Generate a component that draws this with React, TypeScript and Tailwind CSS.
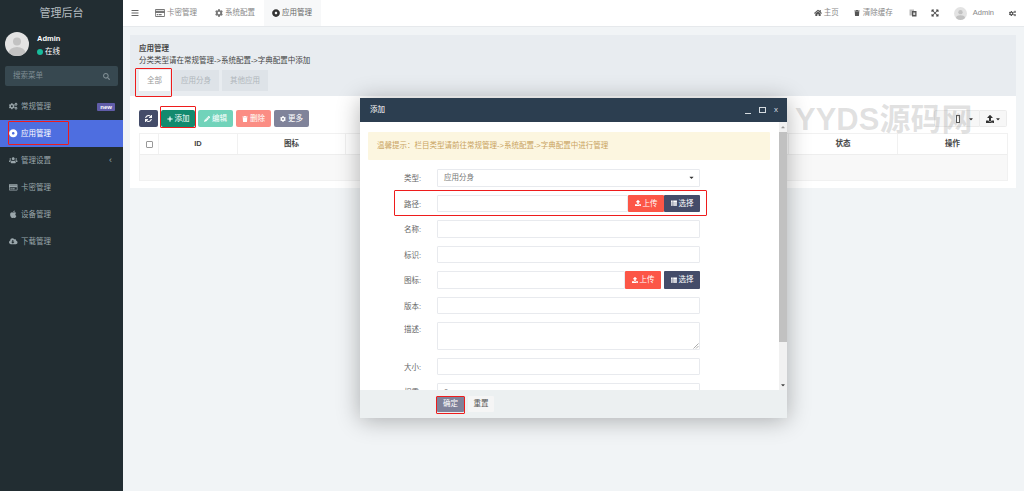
import { ReactNode } from 'react';
import {
  FaApple,
  FaBars,
  FaCaretDown,
  FaCaretUp,
  FaCloudDownloadAlt,
  FaCog,
  FaCogs,
  FaDotCircle,
  FaExpandArrowsAlt,
  FaHome,
  FaPencilAlt,
  FaPlus,
  FaRegCreditCard,
  FaSearch,
  FaSync,
  FaThList,
  FaTrash,
  FaUpload,
  FaUsers,
} from 'react-icons/fa';

const font = "font-['Liberation_Sans','Noto_Sans_CJK_SC',sans-serif]";

function Avatar({ size }: { size: string }) {
  return (
    <svg viewBox="0 0 24 24" className={`${size} shrink-0 rounded-full`}>
      <rect width="24" height="24" fill="#e3e3e3" />
      <circle cx="12" cy="9.5" r="4" fill="#c2c2c2" />
      <ellipse cx="12" cy="21" rx="8.5" ry="6" fill="#c2c2c2" />
    </svg>
  );
}

function MenuItem({ icon, label, active, children }: { icon: ReactNode; label: string; active?: boolean; children?: ReactNode }) {
  return (
    <div className={`flex h-[27px] items-center gap-[3px] pl-[9px] pr-[8px] text-[7.5px] ${active ? 'bg-[#4e6ee0] text-white' : 'text-[#9aa6ab]'}`}>
      <span className="flex w-[9px] justify-center text-[8.5px]">{icon}</span>
      <span>{label}</span>
      <span className="ml-auto">{children}</span>
    </div>
  );
}

function Sidebar() {
  return (
    <aside className="flex w-[123px] shrink-0 flex-col bg-[#222d32]">
      <div className="flex h-[26px] items-center justify-center text-[11px] text-[#b4bcc0]">管理后台</div>
      <div className="flex h-[40px] items-start gap-[8px] pl-[5px] pt-[6px]">
        <Avatar size="h-[24px] w-[24px]" />
        <div className="text-[7.5px] leading-[13px] text-white">
          <div className="font-bold">Admin</div>
          <div className="flex items-center gap-[2px]">
            <span className="h-[6px] w-[6px] rounded-full bg-[#18bc9c]" />
            在线
          </div>
        </div>
      </div>
      <div className="mx-[5px] flex h-[20px] items-center justify-between rounded-[2px] bg-[#374850] px-[8px] text-[7.5px] text-[#7f8d93]">
        搜索菜单
        <FaSearch className="text-[7px]" />
      </div>
      <nav className="mt-[7px]">
        <MenuItem icon={<FaCogs />} label="常规管理">
          <span className="block h-[8px] rounded-[1px] bg-[#605ca8] px-[3px] text-[6px] font-bold leading-[8px] text-white">new</span>
        </MenuItem>
        <MenuItem icon={<FaDotCircle />} label="应用管理" active />
        <MenuItem icon={<FaUsers />} label="管理设置">
          <span className="mr-[3px] text-[9px]">‹</span>
        </MenuItem>
        <MenuItem icon={<FaRegCreditCard />} label="卡密管理" />
        <MenuItem icon={<FaApple />} label="设备管理" />
        <MenuItem icon={<FaCloudDownloadAlt />} label="下载管理" />
      </nav>
    </aside>
  );
}

function TopTab({ icon, label, active }: { icon: ReactNode; label: string; active?: boolean }) {
  return (
    <div className={`flex h-full items-center gap-[2px] pl-[8px] text-[7.5px] ${active ? 'bg-[#f7f8f9] pr-[9px] text-[#666]' : 'pr-[8px] text-[#888]'}`}>
      <span className={active ? 'text-[#333]' : 'text-[#777]'}>{icon}</span>
      {label}
    </div>
  );
}

function LanguageIcon() {
  return (
    <svg viewBox="0 0 16 16" className="ml-[16px] h-[8px] w-[8px]">
      <rect x="1" y="1" width="9" height="12" fill="#bbb" />
      <rect x="6" y="4" width="9" height="11" fill="#555" />
      <rect x="8.5" y="7" width="4" height="5" fill="#ddd" />
    </svg>
  );
}

function TopBar() {
  return (
    <header className="flex h-[27px] shrink-0 items-center border-b border-[#e6e9ec] bg-white text-[#666]">
      <FaBars className="ml-[8px] mr-[8px] text-[8px]" />
      <TopTab icon={<FaRegCreditCard className="text-[10px]" />} label="卡密管理" />
      <div className="w-[2px]" />
      <TopTab icon={<FaCog className="text-[8px]" />} label="系统配置" />
      <div className="w-[1px]" />
      <TopTab icon={<FaDotCircle className="text-[8px]" />} label="应用管理" active />
      <div className="ml-auto flex items-center text-[7.5px] text-[#888]">
        <FaHome className="mr-[2px] text-[8px] text-[#555]" />
        主页
        <FaTrash className="ml-[15px] mr-[3px] text-[6px] text-[#555]" />
        清除缓存
        <LanguageIcon />
        <FaExpandArrowsAlt className="ml-[14px] text-[8px] text-[#444]" />
        <span className="ml-[15px] mr-[6px]">
          <Avatar size="h-[13px] w-[13px]" />
        </span>
        Admin
        <FaCogs className="ml-[15px] mr-[8px] text-[7px] text-[#555]" />
      </div>
    </header>
  );
}

function ToolButton({ color, children }: { color: string; children: ReactNode }) {
  return <div className={`flex h-[17px] items-center justify-center gap-[2px] rounded-[2px] text-[7.5px] text-white ${color}`}>{children}</div>;
}

function Th({ className, children }: { className: string; children?: ReactNode }) {
  return <div className={`flex h-full items-center justify-center border-r border-[#f1f1f1] text-[7.5px] font-bold text-[#444] ${className}`}>{children}</div>;
}

function Panel() {
  return (
    <section className="ml-[7px] mr-[8px] mt-[8px] flex-col bg-white">
      <div className="h-[61px] bg-[#e8ecf0] pl-[9px] pt-[8px] text-[7.5px] leading-[12px] text-[#444]">
        <div className="font-bold">应用管理</div>
        <div>分类类型请在常规管理-&gt;系统配置-&gt;字典配置中添加</div>
        <div className="mt-[3px] flex h-[21px] gap-[3px] text-[#b0b6bb]">
          <div className="flex w-[31px] items-center justify-center bg-white text-[#999]">全部</div>
          <div className="flex w-[46px] items-center justify-center bg-[#dee3e8]">应用分身</div>
          <div className="flex w-[46px] items-center justify-center bg-[#dee3e8]">其他应用</div>
        </div>
      </div>
      <div className="h-[92px] px-[9px] pt-[14px]">
        <div className="flex gap-[3px]">
          <ToolButton color="w-[19px] bg-[#444c69]"><FaSync className="text-[7px]" /></ToolButton>
          <ToolButton color="w-[34px] bg-[#128a6e]"><FaPlus className="text-[6px]" />添加</ToolButton>
          <ToolButton color="w-[35px] bg-[#71d3ba]"><FaPencilAlt className="text-[6px]" />编辑</ToolButton>
          <ToolButton color="w-[35px] bg-[#fb8d84]"><FaTrash className="text-[6px]" />删除</ToolButton>
          <ToolButton color="w-[35px] bg-[#80839a]"><FaCog className="text-[6px]" />更多</ToolButton>
          <div className="ml-auto flex h-[17px] text-[#333]">
            <div className="flex w-[46px] items-center justify-end gap-[8px] rounded-l-[2px] border border-[#ececec] bg-[#f7f7f7] pr-[5px] text-[6px]">
              <span className="h-[8px] w-[4px] border border-[#555]" />
              <FaCaretDown />
            </div>
            <div className="flex w-[27px] items-center justify-center gap-[1px] rounded-r-[2px] border border-l-0 border-[#ececec] bg-[#f7f7f7] text-[6px]">
              <FaUpload className="text-[8px]" />
              <FaCaretDown />
            </div>
          </div>
        </div>
        <div className="mt-[6px] w-[869px] border border-[#f1f1f1]">
          <div className="flex h-[21px] border-b border-[#eeeeee]">
            <Th className="w-[19px]"><span className="h-[7px] w-[7px] rounded-[1px] border border-[#999] bg-white" /></Th>
            <Th className="w-[79px]">ID</Th>
            <Th className="w-[108px]">图标</Th>
            <Th className="w-[108px]">名称</Th>
            <Th className="flex-1" />
            <Th className="w-[109px]">状态</Th>
            <Th className="w-[109px] border-r-0">操作</Th>
          </div>
          <div className="h-[25px] bg-[#f8f8f8]" />
        </div>
      </div>
    </section>
  );
}

function Field({ label, tall, children }: { label: string; tall?: boolean; children?: ReactNode }) {
  return (
    <div className={`mb-[8px] flex ${tall ? 'h-[27.5px]' : 'h-[17.5px]'}`}>
      <div className={`w-[69px] pl-[36px] text-[7.5px] text-[#666] ${tall ? 'pt-[2px]' : 'leading-[19px]'}`}>{label}:</div>
      <div className="relative flex h-full w-[263px]">{children ?? <Input />}</div>
    </div>
  );
}

function Input({ children }: { children?: ReactNode }) {
  return <div className="flex h-full min-w-0 flex-1 items-center rounded-[1px] border border-[#e8eaee] bg-white pl-[6px] text-[7.5px] text-[#777]">{children}</div>;
}

function UploadButtons({ uploadClass }: { uploadClass: string }) {
  return (
    <>
      <Input />
      <div className={`flex h-full w-[36px] shrink-0 items-center justify-center gap-[2px] rounded-[1px] bg-[#fc5647] text-[7.5px] text-white ${uploadClass}`}>
        <FaUpload className="text-[6px]" />上传
      </div>
      <div className="flex h-full w-[36px] shrink-0 items-center justify-center gap-[2px] rounded-[1px] bg-[#444c69] text-[7.5px] text-white">
        <FaThList className="text-[6px]" />选择
      </div>
    </>
  );
}

function Modal() {
  return (
    <div className="absolute left-[360px] top-[98px] flex h-[320px] w-[427px] flex-col bg-white shadow-[0_2px_22px_rgba(0,0,0,0.3)]">
      <div className="flex h-[24px] shrink-0 items-center bg-[#2c3e50] pl-[10px] pr-[9px] text-[7.5px] text-white">
        添加
        <div className="ml-auto flex items-center gap-[8px] text-[8px] text-[#d5dbe0]">
          <span className="h-[1px] w-[6px] translate-y-[3px] bg-[#d5dbe0]" />
          <span className="h-[6px] w-[7px] border border-[#d5dbe0]" />
          <span>x</span>
        </div>
      </div>
      <div className="flex min-h-0 flex-1">
        <div className="min-w-0 flex-1 overflow-hidden px-[8px] pt-[10px]">
          <div className="mb-[9px] flex h-[28px] w-[402px] items-center rounded-[1px] bg-[#fcf6e0] pl-[9px] text-[7.5px] text-[#c9a35f]">
            温馨提示：栏目类型请前往常规管理-&gt;系统配置-&gt;字典配置中进行管理
          </div>
          <Field label="类型">
            <Input>
              应用分身
              <FaCaretDown className="ml-auto mr-[4px] text-[7px] text-[#333]" />
            </Input>
          </Field>
          <Field label="路径"><UploadButtons uploadClass="" /></Field>
          <Field label="名称" />
          <Field label="标识" />
          <Field label="图标"><UploadButtons uploadClass="mr-[3px]" /></Field>
          <Field label="版本" />
          <Field label="描述" tall>
            <Input />
            <svg viewBox="0 0 6 6" className="absolute bottom-[1px] right-[1px] h-[6px] w-[6px]">
              <path d="M0.5 5.5 L5.5 0.5 M3 5.5 L5.5 3" stroke="#888" strokeWidth="0.7" />
            </svg>
          </Field>
          <Field label="大小" />
          <Field label="权重"><Input>0</Input></Field>
        </div>
        <div className="flex w-[8px] shrink-0 flex-col bg-[#f1f1f1]">
          <div className="flex h-[10px] items-center justify-center text-[6px] text-[#999]"><FaCaretUp /></div>
          <div className="h-[210px] bg-[#c1c1c1]" />
          <div className="mt-auto flex h-[10px] items-center justify-center text-[6px] text-[#444]"><FaCaretDown /></div>
        </div>
      </div>
      <div className="flex h-[28px] shrink-0 items-center gap-[4px] bg-[#ecf0f1] pl-[77px] text-[7.5px]">
        <div className="flex h-[16px] w-[27px] items-center justify-center rounded-[1px] bg-[#7f8299] text-white">确定</div>
        <div className="flex h-[16px] w-[26px] items-center justify-center rounded-[1px] bg-[#f5f5f5] text-[#555]">重置</div>
      </div>
    </div>
  );
}

function Mark({ className }: { className: string }) {
  return <div className={`pointer-events-none absolute rounded-[1px] border-[1.5px] border-[#ee1c1c] ${className}`} />;
}

export default function App() {
  return (
    <div className={`relative flex h-[491px] w-[1024px] overflow-hidden bg-[#f1f4f6] ${font}`}>
      <Sidebar />
      <main className="flex min-w-0 flex-1 flex-col">
        <TopBar />
        <Panel />
      </main>
      <div className="pointer-events-none absolute left-[795px] top-[104px] whitespace-nowrap text-[31px] font-bold leading-[32px] text-[rgba(120,120,120,0.22)]">YYDS源码网</div>
      <Modal />
      <Mark className="left-[8px] top-[121px] h-[24px] w-[61px]" />
      <Mark className="left-[135px] top-[68px] h-[29px] w-[37px]" />
      <Mark className="left-[160px] top-[106px] h-[22px] w-[36px]" />
      <Mark className="left-[394px] top-[190px] h-[26px] w-[313px]" />
      <Mark className="left-[436px] top-[396px] h-[18px] w-[29px]" />
    </div>
  );
}
